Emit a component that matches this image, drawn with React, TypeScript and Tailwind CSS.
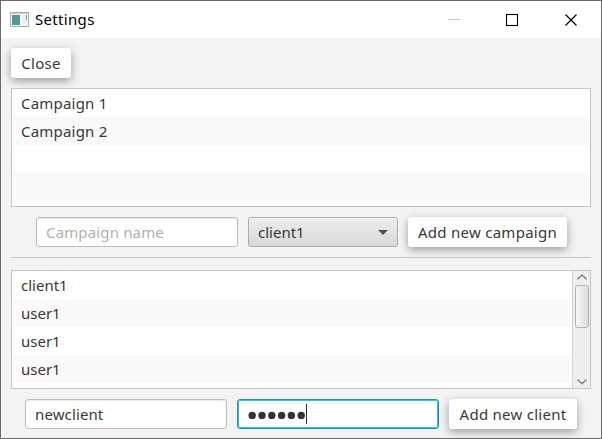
import type { ReactNode } from 'react';

function RaisedButton({ className, children }: { className: string; children: ReactNode }) {
  return (
    <button
      className={`flex h-[30px] shrink-0 items-center justify-center rounded-[3px] bg-white tracking-[0.27px] whitespace-nowrap shadow-[0_3px_8px_rgba(0,0,0,0.36)] ${className}`}
    >
      {children}
    </button>
  );
}

function Rows({ items, className }: { items: string[]; className: string }) {
  return (
    <ul className={`min-w-0 flex-1 pl-px ${className}`}>
      {items.map((item, i) => (
        <li key={i} className="flex h-7 items-center bg-white pl-2 leading-7 even:bg-[#f9f9f9]">
          {item}
        </li>
      ))}
    </ul>
  );
}

function ScrollBar() {
  return (
    <div className="flex w-[18px] shrink-0 flex-col items-center justify-between border-l border-[#d2d2d2] bg-[#eeeeee]">
      <svg className="h-3.5 w-4 shrink-0" viewBox="0 0 16 14" fill="none" stroke="#808080" strokeWidth="1.5">
        <path d="M3.5 8.2 8 4l4.500 4.200" />
      </svg>
      <div className="h-[43px] w-3.5 shrink-0 rounded-[3px] border border-[#b2b2b2] bg-linear-to-r from-[#f8f8f8] to-[#dcdcdc]" />
      <div className="flex-1" />
      <svg className="h-3.5 w-4 shrink-0" viewBox="0 0 16 14" fill="none" stroke="#808080" strokeWidth="1.5">
        <path d="M3.500 5.500 8 9.700 12.500 5.500" />
      </svg>
    </div>
  );
}

export default function App() {
  return (
    <div className="flex h-[439px] w-[602px] flex-col overflow-hidden border border-[#6b696b] bg-[#f3f3f3] font-['Noto_Sans','Open_Sans',sans-serif] text-[15px] text-[#383838]">
      <header className="flex h-[37px] shrink-0 items-center bg-white pl-[9px] text-black">
        <svg className="h-4 w-[19px]" viewBox="0 0 19 16">
          <defs>
            <linearGradient id="pane" x1="0" y1="0" x2="1" y2="1">
              <stop stopColor="#5d91a5" />
              <stop offset="1" stopColor="#4fa07f" />
            </linearGradient>
          </defs>
          <rect x=".5" y=".5" width="18" height="14" fill="#f5f7f9" stroke="#a5adb5" />
          <path d="M1 1.500h17" stroke="#c8d0d8" />
          <rect x="2" y="3" width="8" height="10" fill="url(#pane)" />
          <rect x="12" y="3" width="5" height="10" fill="#edf0f2" />
          <path d="M16.500 3v5" stroke="#5b9c8d" />
        </svg>
        <span className="ml-1.5 flex-1 pb-0.5 leading-6 tracking-[0.32px]">Settings</span>
        <svg className="mr-[23px] h-4 w-[131px]" viewBox="0 0 131 16" fill="none">
          <path d="M1 7.500h12" stroke="#c4c4c4" />
          <rect x="59.500" y="2.500" width="11" height="11" stroke="#000" strokeWidth="1.100" />
          <path d="m118.500 2.500 11 11m0-11-11 11" stroke="#000" strokeWidth="1.200" />
        </svg>
      </header>

      <main className="flex flex-1 flex-col px-2.5 pt-2.5">
        <RaisedButton className="w-[60px]">Close</RaisedButton>

        <section className="mt-2.5 flex h-[119px] shrink-0 overflow-hidden border border-[#c5c5c5] bg-white">
          <Rows className="tracking-[0.2px]" items={['Campaign 1', 'Campaign 2', '', '']} />
        </section>

        <div className="mt-2.5 flex shrink-0 gap-2.5 pl-[25px]">
          <input
            className="h-[30px] w-[202px] rounded-[3px] border border-[#bdbdbd] bg-white px-[9px] tracking-[0.15px] shadow-[inset_0_1px_1px_#e8e8e8] outline-none placeholder:text-[#b0b0b0]"
            placeholder="Campaign name"
          />
          <button className="flex h-[30px] w-[150px] items-center justify-between rounded-[3px] border border-[#ababab] bg-linear-to-b from-[#ececec] to-[#d9d9d9] pr-[9px] pl-[9px] shadow-[inset_0_1px_0_#f8f8f8]">
            client1
            <svg className="h-[5px] w-[10px]" viewBox="0 0 10 5">
              <path d="M0 0h10L5 5z" fill="#505050" />
            </svg>
          </button>
          <RaisedButton className="w-[159px]">Add new campaign</RaisedButton>
        </div>

        <div className="mt-2.5 h-px shrink-0 bg-[#c5c5c5]" />

        <section className="mt-3 flex h-[119px] shrink-0 overflow-hidden border border-[#c5c5c5] bg-white">
          <Rows className="pr-0.5" items={['client1', 'user1', 'user1', 'user1']} />
          <ScrollBar />
        </section>

        <div className="mt-2.5 flex shrink-0 gap-2.5 pl-3.5">
          <input
            className="h-[30px] w-[202px] rounded-[3px] border border-[#bdbdbd] bg-white px-[9px] tracking-[0.12px] shadow-[inset_0_1px_1px_#e8e8e8] outline-none"
            defaultValue="newclient"
          />
          <div className="flex h-[30px] w-[202px] items-center rounded-[3px] border border-[#168ebc] bg-white pl-[9.500px] shadow-[inset_0_0_0_1px_#3cbce6]">
            <svg className="h-5 w-[58px]" viewBox="0 0 58 20" fill="#333333">
              {[4.2, 14, 23.8, 33.6, 43.4, 53.2].map((x) => (
                <circle key={x} cx={x} cy="11.400" r="3.700" />
              ))}
            </svg>
            <span className="h-5 w-px bg-[#333333]" />
          </div>
          <RaisedButton className="w-[128px]">Add new client</RaisedButton>
        </div>
      </main>
    </div>
  );
}
